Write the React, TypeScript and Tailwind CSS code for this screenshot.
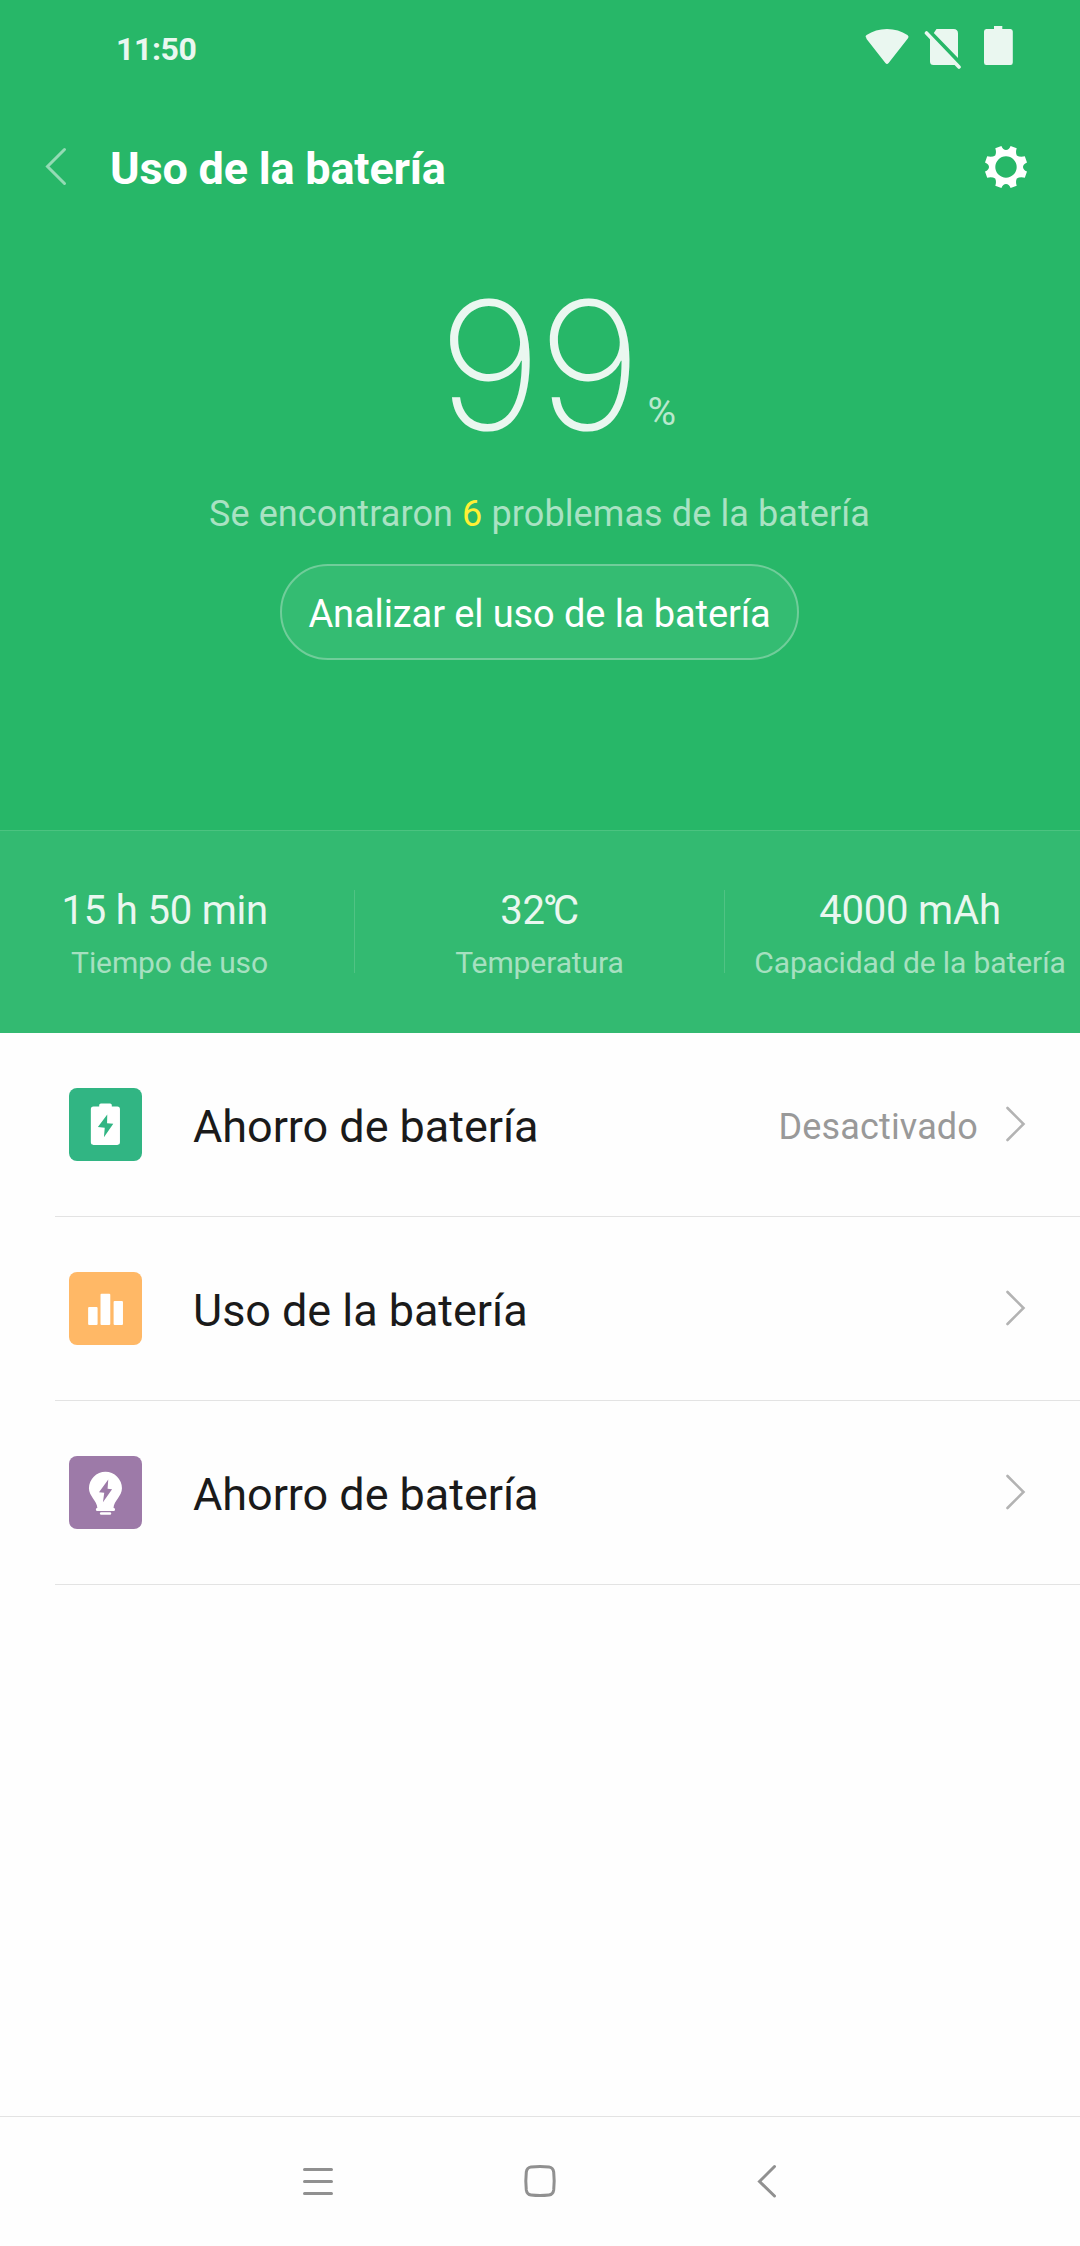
import React from "react";

type Stat = {
  value: React.ReactNode;
  label: string;
  className: string;
};

type Item = {
  title: string;
  status?: string;
  icon: React.ReactNode;
};

const StatusIcons = () => (
  <div className="flex items-start text-[#eaf7f0]">
    {/* Wi-Fi */}
    <svg width="44" height="44" viewBox="0 0 44 44" fill="currentColor">
      <path d="M1.6 12.2Q-.4 10.6 1.6 9Q10.500 3 22 3Q33.500 3 42.400 9Q44.400 10.600 42.800 12.400L23.600 37Q22 39 20.400 37L1.200 12.400Z" />
    </svg>
    {/* No SIM */}
    <svg className="ml-[15px]" width="38" height="46" viewBox="0 0 38 46">
      <path
        fill="currentColor"
        d="M12.500 3H29.500Q34 3 34 7.500V32L9.800 7ZM6 10.500L34 39H9.500Q6 39 6 35.500Z"
      />
      <path
        d="M2.500 7L35 41"
        stroke="currentColor"
        strokeWidth="3.600"
        strokeLinecap="round"
      />
    </svg>
    {/* Battery */}
    <svg className="ml-[22px]" width="29" height="44" viewBox="0 0 29 44" fill="currentColor">
      <path d="M10 0H18.300V3H26.500Q28.800 3 28.800 5.500V36.500Q28.800 39 26.500 39H2.300Q0 39 0 36.500V5.500Q0 3 2.300 3H10Z" />
    </svg>
  </div>
);

const GearIcon = () => (
  <svg width="42" height="42" viewBox="-21 -21 42 42">
    <path
      fill="#fff"
      fillRule="evenodd"
      d="M-4.600 -21Q-3 -16.900 0 -16.900Q3 -16.900 4.600 -21L10.700 -18.800Q9.300 -14.600 10.800 -11.600Q13.800 -9.600 18.800 -10.700L21 -4.600Q17 -2.800 17 0Q17 2.800 21 4.600L18.800 10.700Q13.800 9.600 10.800 11.600Q9.300 14.600 10.700 18.800L4.600 21Q3 17 0 17Q-3 17 -4.600 21L-10.700 18.800Q-9.300 14.600 -10.800 11.600Q-13.800 9.600 -18.800 10.700L-21 4.600Q-17 2.800 -17 0Q-17 -2.800 -21 -4.600L-18.800 -10.700Q-13.800 -9.600 -10.800 -11.600Q-9.300 -14.600 -10.700 -18.800ZM0 -10.700A10.700 10.700 0 1 0 0 10.700A10.700 10.700 0 1 0 0 -10.700Z"
    />
  </svg>
);

const BatteryTile = () => (
  <svg width="73" height="73" viewBox="0 0 72.500 72.500">
    <rect width="72.500" height="72.500" rx="8" fill="#31b583" />
    <path
      fill="#fff"
      d="M30 18V17Q30 15.300 31.700 15.300H40.800Q42.500 15.300 42.500 17V18.300H48Q50.600 18.300 50.600 21V54Q50.600 56.500 48 56.500H24.300Q21.700 56.500 21.700 54V21Q21.700 18.300 24.300 18.300H30Z"
    />
    <path fill="#31b583" d="M38 26.300L28.700 38.700L35.500 39.500L34.700 49L44 35.600L37.800 35Z" />
  </svg>
);

const ChartTile = () => (
  <svg width="73" height="73" viewBox="0 0 72.500 72.500">
    <rect width="72.500" height="72.500" rx="8" fill="#ffb866" />
    <g fill="#fff">
      <rect x="19" y="34.700" width="9.400" height="18" rx="1" />
      <rect x="31.300" y="21.700" width="9.700" height="31" rx="1" />
      <rect x="44.300" y="28.700" width="9.300" height="24" rx="1" />
    </g>
  </svg>
);

const BulbTile = () => (
  <svg width="73" height="73" viewBox="0 0 72.500 72.500">
    <rect width="72.500" height="72.500" rx="8" fill="#9d7aa8" />
    <g fill="#fff">
      <path d="M36.200 15.700A16.400 16.400 0 0 1 52.600 32.100C52.600 40 44.500 44.500 44.200 52H28.200C27.900 44.500 19.800 40 19.800 32.100A16.400 16.400 0 0 1 36.200 15.700Z" />
      <rect x="26.700" y="51.700" width="19" height="3" rx="1.400" />
      <rect x="30.700" y="55.800" width="11.200" height="2.600" rx="1.200" />
    </g>
    <path fill="#9d7aa8" d="M39 23.300L29.800 36L35 36.500L33.700 46L42.800 33L38.300 32.500Z" />
  </svg>
);

const stats: Stat[] = [
  { value: "15 h 50 min", label: "Tiempo de uso", className: "w-[354px] items-end pr-[86px]" },
  {
    value: (
      <>
        32<span className="-ml-[2px] tracking-[-4.7px]">°</span>C
      </>
    ),
    label: "Temperatura",
    className: "w-[369px] items-center",
  },
  { value: "4000 mAh", label: "Capacidad de la batería", className: "w-[355px] items-center pl-[15px]" },
];

const items: Item[] = [
  { title: "Ahorro de batería", status: "Desactivado", icon: <BatteryTile /> },
  { title: "Uso de la batería", icon: <ChartTile /> },
  { title: "Ahorro de batería", icon: <BulbTile /> },
];

const App = () => {
  return (
    <div className="flex h-[2246px] w-[1080px] flex-col overflow-hidden bg-[#fefefe] font-[Roboto,sans-serif]">
      <div className="flex h-[1033px] flex-col bg-[#27b768] text-white">
        {/* Status bar */}
        <div className="flex h-[98px] items-start justify-between pt-[26px] pr-[67px] pl-[116px]">
          <div className="text-[32px] leading-[46px] font-bold tracking-[-0.4px] text-[#eaf7f0]">
            11:50
          </div>
          <StatusIcons />
        </div>

        {/* Title bar */}
        <div className="flex h-[138px] items-center pr-[53px] pl-[45px]">
          <svg width="22" height="40" viewBox="0 0 22 40" fill="none">
            <path
              d="M19.500 2.500L2.500 19.500L19.500 36.500"
              stroke="#93dbb4"
              strokeWidth="3"
              strokeLinecap="round"
            />
          </svg>
          <h1 className="mt-[3px] ml-[43px] grow text-[45px] leading-[60px] font-bold tracking-[-0.2px]">
            Uso de la batería
          </h1>
          <GearIcon />
        </div>

        {/* Charge level */}
        <div className="mt-[38px] flex h-[184px] items-start pl-[438px]">
          <span className="font-[Inter] text-[178px] leading-[184px] font-extralight tracking-[-4px] text-[#eaf7f0]">
            99
          </span>
          <span className="mt-[118px] ml-[10px] text-[39px] leading-[40px] text-[#b9e8cd]">%</span>
        </div>
        <p className="mt-[30px] mr-px text-center text-[36px] leading-[52px] tracking-[0.1px] text-[#a9e2c3]">
          Se encontraron <span className="text-[#fff035]">6</span> problemas de la batería
        </p>
        <button className="mt-[24px] mr-px h-[96px] w-[519px] self-center rounded-full border-2 border-[#70cd9a] bg-[#34bc72] pt-[5px] text-[38px] tracking-[-0.1px]">
          Analizar el uso de la batería
        </button>

        {/* Stats */}
        <div className="mt-auto flex h-[203px] items-start border-t border-[#4bc380] bg-[#33ba71] pt-[59px]">
          {stats.map((stat, i) => (
            <React.Fragment key={stat.label}>
              {i > 0 && <div className="h-[83px] w-px bg-[#50c384]" />}
              <div className={`flex h-[83px] flex-col ${stat.className}`}>
                <div className="mt-px text-[40px] leading-[40px] tracking-[-0.2px] whitespace-nowrap text-[#eaf7f0]">
                  {stat.value}
                </div>
                <div className="mt-[12px] text-[30px] leading-[40px] tracking-[-0.1px] whitespace-nowrap text-[#a6e0c0]">
                  {stat.label}
                </div>
              </div>
            </React.Fragment>
          ))}
        </div>
      </div>

      {/* Options */}
      <div className="grow">
        {items.map((item, i) => (
          <div
            key={i}
            className="ml-[55px] flex h-[184px] items-center border-b border-[#e3e3e3] pr-[54px] pl-[14px]"
          >
            {item.icon}
            <div className="mt-[5px] ml-[51px] grow text-[45px] tracking-[-0.05px] text-[#1a1a1a]">
              {item.title}
            </div>
            {item.status && (
              <div className="mt-[5px] mr-[28px] text-[36px] tracking-[0.15px] text-[#999]">
                {item.status}
              </div>
            )}
            <svg width="20" height="37" viewBox="0 0 20 37" fill="none">
              <path
                d="M1.500 2L17.500 18L1.500 34"
                stroke="#b3b3b3"
                strokeWidth="2.600"
                strokeLinecap="round"
              />
            </svg>
          </div>
        ))}
      </div>

      {/* Navigation bar */}
      <div className="flex h-[130px] items-center justify-center gap-[188px] border-t border-[#e3e3e3] pb-[2px] text-[#909090]">
        <svg width="34" height="34" viewBox="0 0 34 34" fill="none">
          <path
            d="M3.500 5.500H30.500M3.500 17.500H30.500M3.500 29.500H30.500"
            stroke="currentColor"
            strokeWidth="3"
            strokeLinecap="round"
          />
        </svg>
        <svg width="34" height="34" viewBox="0 0 34 34" fill="none">
          <path
            d="M8 3Q17 2 26 3Q30 3.500 30.700 8Q31.700 17 30.700 26Q30 30.500 26 31Q17 32 8 31Q4 30.500 3.300 26Q2.300 17 3.300 8Q4 3.500 8 3Z"
            stroke="currentColor"
            strokeWidth="3"
          />
        </svg>
        <svg width="34" height="34" viewBox="0 0 34 34" fill="none">
          <path
            d="M29.500 2.500L14.500 17.500L29.500 32"
            stroke="currentColor"
            strokeWidth="3"
            strokeLinecap="round"
          />
        </svg>
      </div>
    </div>
  );
};

export default App;
